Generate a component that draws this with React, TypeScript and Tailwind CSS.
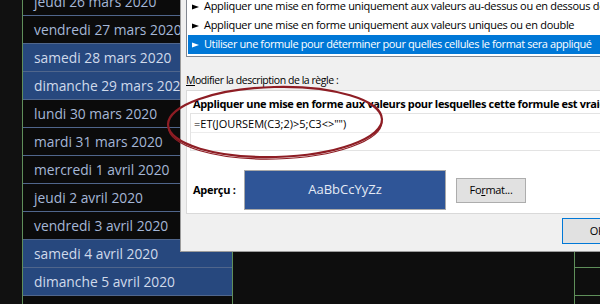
import React from 'react';

interface DateRow {
  label: string;
  weekend: boolean;
}

const rows: DateRow[] = [
  { label: 'jeudi 26 mars 2020', weekend: false },
  { label: 'vendredi 27 mars 2020', weekend: false },
  { label: 'samedi 28 mars 2020', weekend: true },
  { label: 'dimanche 29 mars 2020', weekend: true },
  { label: 'lundi 30 mars 2020', weekend: false },
  { label: 'mardi 31 mars 2020', weekend: false },
  { label: 'mercredi 1 avril 2020', weekend: false },
  { label: 'jeudi 2 avril 2020', weekend: false },
  { label: 'vendredi 3 avril 2020', weekend: false },
  { label: 'samedi 4 avril 2020', weekend: true },
  { label: 'dimanche 5 avril 2020', weekend: true },
  { label: '', weekend: false },
];

const ruleTypes = [
  'Appliquer une mise en forme uniquement aux valeurs au-dessus ou en dessous de la moyenne',
  'Appliquer une mise en forme uniquement aux valeurs uniques ou en double',
  'Utiliser une formule pour déterminer pour quelles cellules le format sera appliqué',
];

function Arrow({ light }: { light: boolean }) {
  return (
    <svg width="7" height="6" viewBox="0 0 7 6" className="shrink-0">
      <path d="M0 0.5 L7 3 L0 5.5 Z" fill={light ? '#ffffff' : '#000000'} />
    </svg>
  );
}

export default function App() {
  return (
    <div className="relative w-[600px] h-[304px] overflow-hidden bg-[#0e0e0e] font-['Open_Sans',sans-serif]">
      {/* Spreadsheet behind the dialog */}
      <div className="flex h-full">
        <div className="w-[22px] shrink-0 bg-[#111111]" />
        <div className="w-[211px] shrink-0 -mt-[12px] flex flex-col border-x border-[#5f8f5a]">
          {rows.map((row, i) => (
            <div
              key={i}
              className={`h-[28px] shrink-0 border-b border-[#50668c] flex items-center pl-[11px] pt-[2px] text-[13.8px] whitespace-nowrap ${
                row.weekend ? 'bg-[#27487e] text-[#d0daeb]' : 'bg-[#0b0b0b] text-[#a5b7d7]'
              }`}
            >
              {row.label}
            </div>
          ))}
        </div>
        <div className="flex-1 border-r border-[#5f8f5a]" />
        <div className="w-[25px] shrink-0 -mt-[12px] flex flex-col">
          {rows.map((_, i) => (
            <div key={i} className="h-[28px] shrink-0 border-b border-[#5f8f5a]" />
          ))}
        </div>
      </div>

      {/* Rule dialog */}
      <div className="absolute left-[180px] top-0 w-[440px] h-[252px] bg-[#f0f0f0] border-l border-b border-[#9c9c9c] text-[11px] tracking-[-0.3px] text-black">
        {/* Rule type list */}
        <div className="ml-[5px] h-[57px] bg-white border-l border-b border-[#828790] pl-[1px] overflow-hidden">
          <div className="-mt-[3px] flex flex-col">
            {ruleTypes.map((t, i) => {
              const active = i === ruleTypes.length - 1;
              return (
                <div
                  key={i}
                  className={`h-[19px] flex items-center whitespace-nowrap pl-[4px] gap-[5px] ${
                    active ? 'bg-[#0078d7] text-white tracking-[-0.4px]' : ''
                  }`}
                >
                  <Arrow light={active} />
                  <span>{t}</span>
                </div>
              );
            })}
          </div>
        </div>

        <div className="ml-[5px] mt-[15px] h-[16px] leading-[16px] text-[10.5px] tracking-[-0.45px] first-letter:underline">
          Modifier la description de la règle :
        </div>

        {/* Rule description panel */}
        <div className="ml-[5px] mt-[2px] h-[124px] bg-white border border-[#d9d9d9]">
          <div className="mt-[5px] pl-[6px] h-[16px] leading-[16px] font-bold tracking-[-0.35px] whitespace-nowrap">
            Appliquer une mise en forme aux valeurs pour lesquelles cette formule est vraie :
          </div>
          <div className="mt-[1px] ml-[3px] h-[38px] border border-[#e3e3e3] flex flex-col">
            <div className="h-[19px] border-b border-[#ececec] flex items-center pl-[3px] pt-[2px] tracking-normal">
              =ET(JOURSEM(C3;2)&gt;5;C3&lt;&gt;"")
            </div>
          </div>
          <div className="mt-[19px] flex items-center h-[40px]">
            <div className="w-[57px] pl-[6px] font-bold">Aperçu :</div>
            <div className="w-[202px] h-[40px] bg-[#2f5597] border border-[#a9a9a9] flex items-center justify-center text-[13px] tracking-normal text-[#e4eaf5]">
              AaBbCcYyZz
            </div>
            <button className="ml-[10px] w-[70px] h-[25px] bg-[#e1e1e1] border border-[#adadad] flex items-center justify-center">
              Fo<span className="underline">r</span>mat...
            </button>
          </div>
        </div>

        <div className="mt-[4px] pl-[381px]">
          <button className="w-[70px] h-[26px] bg-[#e1e1e1] border border-[#0078d7] flex items-center justify-center text-[11px]">
            OK
          </button>
        </div>
      </div>

      {/* Hand-drawn red annotation circle */}
      <svg className="absolute inset-0 pointer-events-none" width="600" height="304" viewBox="0 0 600 304">
        <g transform="rotate(-1.5 275 122)">
          <ellipse cx="275" cy="122" rx="107" ry="35" fill="none" stroke="#8e1d24" strokeWidth="2.2" />
          <path d="M168 123 A107 35 0 0 0 382 123" fill="none" stroke="#8e1d24" strokeWidth="1.2" transform="translate(0 1)" />
        </g>
      </svg>
    </div>
  );
}
